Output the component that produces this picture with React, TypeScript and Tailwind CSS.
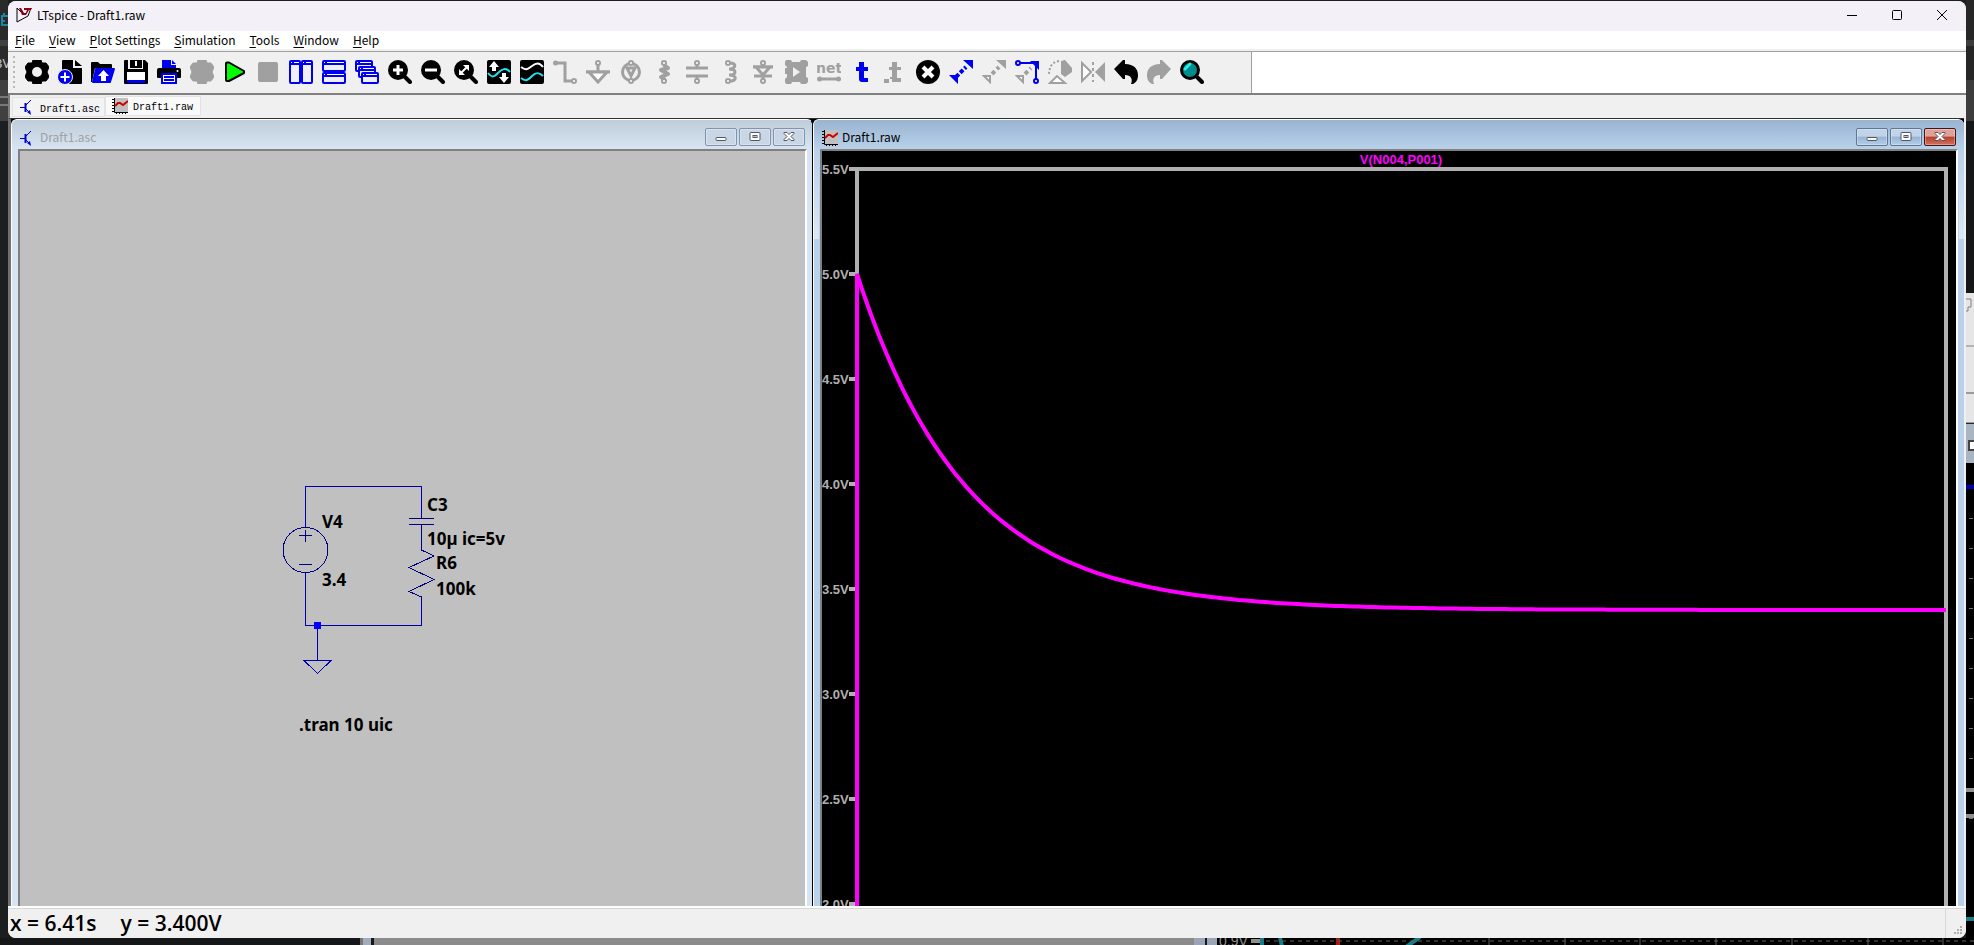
import React from 'react';

const GREY = '#a0a0a0';
const BLUE = '#0000f0';

interface ToolItem {
  label: string;
  icon: React.ReactNode;
}

const gearPath =
  'M8 0h8l1 3h4l3 4-2 5 2 5-3 4h-4l-1 3H8l-1-3H3l-3-4 2-5-2-5 3-4h4z';

const Lens = ({ children }: { children?: React.ReactNode }) => (
  <>
    <circle cx="10" cy="10" r="10" fill="#000" />
    <path d="M15 15l7 7" stroke="#000" strokeWidth="4" strokeLinecap="round" />
    {children}
  </>
);

const Pane = ({ x, y, w, h }: { x: number; y: number; w: number; h: number }) => (
  <>
    <rect x={x + 1} y={y + 1} width={w - 2} height={h - 2} rx="1" fill="#efeffa" stroke={BLUE} strokeWidth="2" />
    <path d={`M${x + 1} ${y + 3}h${w - 2}`} stroke={BLUE} strokeWidth="4" />
    <path d={`M${x + 2} ${y + 2.5}h1M${x + 5} ${y + 2.5}h${w - 7}`} stroke="#fff" />
  </>
);

const Pins = ({ x = 12 }: { x?: number }) => (
  <>
    <circle cx={x} cy="3" r="2" fill="#fff" stroke={GREY} strokeWidth="2" />
    <circle cx={x} cy="21" r="2" fill="#fff" stroke={GREY} strokeWidth="2" />
  </>
);

const tools: ToolItem[] = [
  {
    label: 'Settings',
    icon: (
      <>
        <path d={gearPath} fill="#000" stroke="#000" strokeLinejoin="round" />
        <circle cx="12" cy="12" r="5" fill="#f0f0f0" />
      </>
    ),
  },
  {
    label: 'New schematic',
    icon: (
      <>
        <path d="M4 1q0-1 1-1h10v8h9v15q0 1-1 1H5q-1 0-1-1z" fill="#000" />
        <path d="M17 0l7 6h-7z" fill="#000" />
        <circle cx="7" cy="17" r="7.5" fill={BLUE} stroke="#f0f0f0" />
        <path d="M7 12.500v9M2.500 17h9" stroke="#fff" strokeWidth="2" />
      </>
    ),
  },
  {
    label: 'Open',
    icon: (
      <>
        <path d="M0 3q0-1 1-1h6l2 2h11q1 0 1 1v3H4L1 22H0z" fill="#000" />
        <path d="M5 8h18q1 0 1 1l-4 13q0 1-1 1H2q-1 0-1-1L4 9q0-1 1-1z" fill={BLUE} />
        <path d="M12.500 10l5.500 6h-3v5h-5v-5H7z" fill="#fff" />
      </>
    ),
  },
  {
    label: 'Save',
    icon: (
      <>
        <path d="M1 0h3v9h15V0h2l3 3v20q0 1-1 1H1q-1 0-1-1V1q0-1 1-1z" fill="#000" />
        <path d="M6 0h12v8H6z" fill="#000" />
        <path d="M11 1h2v5h-2z" fill="#fff" />
        <path d="M3 12h18v8H3z" fill="#fff" />
        <path d="M3 20h18v3H3z" fill={BLUE} />
      </>
    ),
  },
  {
    label: 'Print',
    icon: (
      <>
        <path d="M5 0h9v5h5v3H5zM15 0l4 4h-4z" fill={BLUE} />
        <path d="M2 8h20q2 0 2 2v7q0 1-1 1H1q-1 0-1-1v-7q0-2 2-2z" fill="#000" />
        <circle cx="20.500" cy="11" r="1" fill="#fff" />
        <path d="M4 13h16v11H4z" fill="#f0f0f0" />
        <path d="M5 14h14v9H5z" fill="#fff" stroke={BLUE} strokeWidth="2" />
        <path d="M7 17h10M7 20h10" stroke={BLUE} strokeWidth="2" />
      </>
    ),
  },
  { label: 'Configure analysis', icon: <path d={gearPath} fill={GREY} stroke={GREY} strokeLinejoin="round" /> },
  {
    label: 'Run',
    icon: <path d="M3 3.500q0-1 1-1h2L21 11v2L6 21H4q-1 0-1-1z" fill="#00ff00" stroke="#000" strokeWidth="2" strokeLinejoin="round" />,
  },
  { label: 'Stop', icon: <rect x="2" y="2" width="20" height="20" rx="2" fill={GREY} /> },
  {
    label: 'Tile vertically',
    icon: (
      <>
        <Pane x={0} y={0} w={12} h={24} />
        <Pane x={12} y={0} w={12} h={24} />
      </>
    ),
  },
  {
    label: 'Tile horizontally',
    icon: (
      <>
        <Pane x={0} y={0} w={24} h={12} />
        <Pane x={0} y={12} w={24} h={12} />
      </>
    ),
  },
  {
    label: 'Cascade',
    icon: (
      <>
        <Pane x={0} y={0} w={18} h={12} />
        <Pane x={3} y={6} w={18} h={12} />
        <Pane x={6} y={12} w={18} h={12} />
      </>
    ),
  },
  { label: 'Zoom in', icon: <Lens><path d="M10 5v10M5 10h10" stroke="#fff" strokeWidth="3" /></Lens> },
  { label: 'Zoom out', icon: <Lens><path d="M4 10h12" stroke="#fff" strokeWidth="3" /></Lens> },
  {
    label: 'Zoom to fit',
    icon: (
      <Lens>
        <path d="M7 13l6-6" stroke="#fff" strokeWidth="2" />
        <path d="M9 5h6v6zM5 9v6h6z" fill="#fff" />
      </Lens>
    ),
  },
  {
    label: 'Autorange',
    icon: (
      <>
        <rect width="24" height="24" rx="2" fill="#000" />
        <path d="M1 13c4 5 6 4 10 0s8-6 12-1" stroke="#22e0ee" strokeWidth="2" fill="none" />
        <path d="M7 1l5 6H9v4H5V7H2zM17 23l-5-6h3v-4h4v4h3z" fill="#fff" />
      </>
    ),
  },
  {
    label: 'Plot traces',
    icon: (
      <>
        <rect width="24" height="24" rx="2" fill="#000" />
        <path d="M1 7c5 4 7 2 11-1s7-4 11 1" stroke="#fff" strokeWidth="2" fill="none" />
        <path d="M1 18c5 4 7 2 11-2s7-4 11 0" stroke="#22e0ee" strokeWidth="2" fill="none" />
      </>
    ),
  },
  {
    label: 'Wire',
    icon: (
      <>
        <path d="M2 3h10v18h7" stroke={GREY} strokeWidth="3" fill="none" />
        <circle cx="2.500" cy="3" r="2.500" fill={GREY} />
        <circle cx="21" cy="21" r="2" fill="#fff" stroke={GREY} strokeWidth="2" />
      </>
    ),
  },
  {
    label: 'Ground',
    icon: (
      <>
        <path d="M12 4v8M0 12h24" stroke={GREY} strokeWidth="3" />
        <path d="M3 12h18l-9 10z" fill="#fff" stroke={GREY} strokeWidth="3" />
        <circle cx="12" cy="3" r="2" fill="#fff" stroke={GREY} strokeWidth="2" />
      </>
    ),
  },
  {
    label: 'Voltage source',
    icon: (
      <>
        <circle cx="12" cy="12" r="8.500" fill="none" stroke={GREY} strokeWidth="3" />
        <path d="M8 8l4 8 4-8z" stroke={GREY} strokeWidth="3" fill="none" />
        <Pins />
      </>
    ),
  },
  {
    label: 'Resistor',
    icon: (
      <>
        <path d="M12 5l4 3-7 2 7 4-7 3 4 3" stroke={GREY} strokeWidth="4" strokeLinejoin="round" fill="none" />
        <Pins />
      </>
    ),
  },
  {
    label: 'Capacitor',
    icon: (
      <>
        <path d="M12 4v5M12 16v4M1 8h22M1 16h22" stroke={GREY} strokeWidth="3" />
        <Pins />
      </>
    ),
  },
  {
    label: 'Inductor',
    icon: (
      <>
        <path d="M10 3c10-1 8 6 1 6 8 0 8 6 0 6 9 0 8 7-1 6" stroke={GREY} strokeWidth="3" fill="none" />
        <Pins x={10} />
      </>
    ),
  },
  {
    label: 'Diode',
    icon: (
      <>
        <path d="M12 4v16M2 7h20M3 16h18" stroke={GREY} strokeWidth="3" />
        <path d="M5 7h14l-7 8z" fill="#f0f0f0" stroke={GREY} strokeWidth="3" />
        <Pins />
      </>
    ),
  },
  {
    label: 'Component',
    icon: (
      <>
        <path d="M2 0h5l1 2h8l1-2h5l2 2v4l-2 1v10l2 1v4l-2 2h-5l-1-2H8l-1 2H2l-1-2v-3l2-2v-3H1v-6h2V7L1 5V2z" fill={GREY} />
        <path d="M9 7v10l7-5z" fill="#f0f0f0" />
      </>
    ),
  },
  {
    label: 'Label net',
    icon: (
      <>
        <text x="-1" y="13" className="fill-[#a0a0a0] font-['DejaVu_Sans',sans-serif] text-[14px] font-bold">net</text>
        <path d="M3 19h18" stroke={GREY} strokeWidth="3" />
        <circle cx="2.500" cy="19" r="2.500" fill={GREY} />
        <circle cx="21.500" cy="19" r="2.500" fill={GREY} />
      </>
    ),
  },
  { label: 'Text', icon: <path d="M9 2h5v5h4v4h-4v7h4v4h-6q-3 0-3-3v-8H6V7h3z" fill={BLUE} /> },
  {
    label: 'SPICE directive',
    icon: (
      <>
        <path d="M9 2h5v5h4v3h-4v8h4v4H9v-3H7v-2h2v-7H6V7h3z" fill={GREY} />
        <path d="M1 19h5v4H1z" fill={GREY} />
      </>
    ),
  },
  {
    label: 'Delete',
    icon: (
      <>
        <circle cx="12" cy="12" r="12" fill="#000" />
        <path d="M7 7l10 10M17 7L7 17" stroke="#fff" strokeWidth="4" />
      </>
    ),
  },
  {
    label: 'Duplicate',
    icon: (
      <>
        <path d="M14 0h10v9zM0 15h9v9z" fill={BLUE} />
        <path d="M7 17l10-10" stroke={BLUE} strokeWidth="4" strokeDasharray="4 2" />
      </>
    ),
  },
  {
    label: 'Move',
    icon: (
      <>
        <path d="M14 0h10v9z" fill={GREY} />
        <path d="M2 16h6v6z" fill="#fff" stroke={GREY} strokeWidth="2" />
        <path d="M10 14l7-7" stroke={GREY} strokeWidth="4" strokeDasharray="4 3" />
      </>
    ),
  },
  {
    label: 'Drag',
    icon: (
      <>
        <path d="M2 16h6v6z" fill="#fff" stroke={GREY} strokeWidth="2" />
        <path d="M10 14l6-6" stroke={GREY} strokeWidth="4" strokeDasharray="4 3" />
        <path d="M5 3h16v16" stroke={BLUE} strokeWidth="2" fill="none" />
        <path d="M15 1h9v9z" fill={BLUE} />
        <circle cx="3" cy="3" r="2" fill="#fff" stroke={BLUE} strokeWidth="2" />
        <circle cx="21" cy="21" r="2" fill="#fff" stroke={BLUE} strokeWidth="2" />
      </>
    ),
  },
  {
    label: 'Rotate',
    icon: (
      <>
        <path d="M13 1l4-1 7 8v4l-7 5-4-3z" fill={GREY} />
        <path d="M11 1C4 2 1 7 1 15" stroke={GREY} strokeWidth="2" strokeDasharray="2 2" fill="none" />
        <path d="M2 23l7-7 8 7z" fill="#fff" stroke={GREY} strokeWidth="2" />
      </>
    ),
  },
  {
    label: 'Mirror',
    icon: (
      <>
        <path d="M1 3v18l9-9z" fill="#fff" stroke={GREY} strokeWidth="2" />
        <path d="M24 2v20L14 12z" fill={GREY} />
        <path d="M12 2v20" stroke={GREY} strokeWidth="2" strokeDasharray="3 3" />
      </>
    ),
  },
  { label: 'Undo', icon: <path d="M0 9l9-9h2v4c9 0 13 5 13 11 0 4-1 7-5 9h-2c2-5 0-9-6-9v4H9z" fill="#000" /> },
  { label: 'Redo', icon: <path d="M24 9l-9-9h-2v4C4 4 0 9 0 15c0 4 1 7 5 9h2c-2-5 0-9 6-9v4h2z" fill={GREY} /> },
  {
    label: 'Search',
    icon: (
      <>
        <path d="M16 16l6 6" stroke="#000" strokeWidth="4" strokeLinecap="round" />
        <circle cx="10" cy="10" r="8.500" fill="#008b8b" stroke="#000" strokeWidth="3" />
        <path d="M5 9l5-5" stroke="#22f0f0" strokeWidth="3" strokeLinecap="round" />
      </>
    ),
  },
];

const menus = ['File', 'View', 'Plot Settings', 'Simulation', 'Tools', 'Window', 'Help'];

const SchematicIcon = () => (
  <svg width="16" height="16" viewBox="0 0 16 16" fill="none" stroke="#0000d0" aria-hidden="true">
    <path d="M0 8.500h5" />
    <path d="M5.500 4v9" strokeWidth="2" />
    <path d="M6 6l5-5M6 10l3 3" />
    <path d="M7 13l4 3-1-5z" fill="#0000d0" stroke="none" />
  </svg>
);

const PlotIcon = () => (
  <svg width="16" height="16" viewBox="0 0 16 16" fill="none" aria-hidden="true">
    <path d="M2 0h14v14H2z" fill="#c0c0c0" />
    <path d="M2.500 0v14.500H16" stroke="#000" />
    <path d="M0 1.500h2M0 4.500h2M0 7.500h2M0 10.500h2M0 13.500h2M4.500 14v2M7.500 14v2M10.500 14v2M13.500 14v2" stroke="#000" />
    <path d="M3 8l3-3h2l3 2 5-4" stroke="#d00000" strokeWidth="2" />
  </svg>
);

const TitleBar = () => (
  <header className="flex h-[30px] items-center bg-[#f3f0f8] pr-0.5 pb-0.5">
    <svg className="ml-2 shrink-0" width="16" height="16" viewBox="0 0 16 16" aria-hidden="true">
      <path d="M1 1v14l11-6 3-8" fill="none" stroke="#000" />
      <path d="M1 1l5 5" stroke="#000" />
      <path d="M3 1h2l3 5h2l-1 2H6zM8 1h8l-1 2h-2l-3 5H9l2-5H8z" fill="#8b0010" />
    </svg>
    <h1 className="ml-[5px] grow font-['Noto_Sans_CJK_SC',sans-serif] text-[12px] leading-4 text-black">
      LTspice - Draft1.raw
    </h1>
    <button aria-label="Minimize" className="flex h-full w-[45px] items-center justify-center">
      <svg width="10" height="10"><path d="M0 5.500h10" stroke="#000" /></svg>
    </button>
    <button aria-label="Maximize" className="flex h-full w-[45px] items-center justify-center">
      <svg width="10" height="10"><rect x=".5" y=".5" width="9" height="9" rx="1" fill="none" stroke="#000" /></svg>
    </button>
    <button aria-label="Close" className="flex h-full w-[45px] items-center justify-center">
      <svg width="10" height="10"><path d="M0 0l10 10M10 0L0 10" stroke="#000" /></svg>
    </button>
  </header>
);

const MenuBar = () => (
  <nav className="flex h-5 gap-3.5 border-b-2 border-[#f0f0f0] bg-white pl-[7px] font-['Noto_Sans_CJK_SC',sans-serif] text-[12px] leading-[18px] text-black">
    {menus.map((name) => (
      <button key={name} className="whitespace-nowrap">
        <span className="underline underline-offset-2">{name[0]}</span>
        {name.slice(1)}
      </button>
    ))}
  </nav>
);

const Toolbar = () => (
  <div className="flex h-[44px] border-t border-b-2 border-t-[#a0a0a0] border-b-[#808080] bg-white">
    <div role="toolbar" className="flex items-center gap-[9px] border-r border-[#a0a0a0] bg-[#f0f0f0] pr-[47px] pl-[5px]">
      <div className="mr-px h-8 w-0.5 shrink-0 bg-[repeating-linear-gradient(#b8b8b8_0_2px,transparent_2px_5px)]"></div>
      {tools.map((tool) => (
        <button key={tool.label} aria-label={tool.label} className="h-6 w-6 shrink-0">
          <svg width="24" height="24" viewBox="0 0 24 24" fill="none">{tool.icon}</svg>
        </button>
      ))}
    </div>
  </div>
);

const DocumentTabs = () => (
  <div role="tablist" className="flex h-[23px] items-start border-l-2 border-[#808080] bg-[#f0f0f0] pl-0.5 font-['Liberation_Mono',monospace] text-[10px] text-black">
    <button role="tab" aria-selected="false" className="mt-0.5 flex h-5 items-center border border-[#e3e3e3] bg-[#f3f3f3] pt-px pr-1 pl-[7px]">
      <SchematicIcon />
      <span className="ml-1 pt-1">Draft1.asc</span>
    </button>
    <button role="tab" aria-selected="true" className="mt-px flex h-5 items-center border border-[#e3e3e3] bg-[#f9f9f9] pr-[7px] pl-1.5">
      <PlotIcon />
      <span className="ml-[5px] pt-1">Draft1.raw</span>
    </button>
  </div>
);

const CaptionButton = ({ kind, active }: { kind: 'Minimize' | 'Restore' | 'Close'; active: boolean }) => {
  let tone = 'border-[#8194ae] bg-[#c9d6e6]';
  if (active) {
    tone =
      kind === 'Close'
        ? 'border-[#43141a] bg-[linear-gradient(#e0a197_0_45%,#b8402b_50%,#d3705c)]'
        : 'border-[#5f7695] bg-[linear-gradient(#c0d3e8_0_45%,#98b4d3_50%,#b4cde8)]';
  }
  return (
    <button aria-label={kind} className={`flex h-[18px] w-8 items-center justify-center rounded-xs border inset-ring inset-ring-white/30 ${tone}`}>
      <svg width="12" height="10" viewBox="0 0 12 10" fill="#fff" stroke="#535666">
        {kind === 'Minimize' && <rect x="1" y="5.500" width="10" height="3" rx="1" />}
        {kind === 'Restore' && (
          <>
            <rect x="1" y=".5" width="10" height="8" rx="1" />
            <rect x="4" y="3.500" width="4" height="2" fill="#b4c4d8" />
          </>
        )}
        {kind === 'Close' && <path d="M1 .5h3l2 2 2-2h3v1L8 4.500l3 3v1H8l-2-2-2 2H1v-1l3-3-3-3z" />}
      </svg>
    </button>
  );
};

interface ChildWindowProps {
  title: string;
  active: boolean;
  icon: React.ReactNode;
  children: React.ReactNode;
}

const ChildWindow = ({ title, active, icon, children }: ChildWindowProps) => (
  <section
    className={`flex min-w-0 flex-col overflow-hidden rounded-t-md border-t border-l border-white ${
      active ? 'bg-[#b9d1ea]' : 'border-r border-r-black bg-[#d7e4f2]'
    }`}
  >
    <div
      className={`flex h-[29px] shrink-0 items-end gap-0.5 pb-[3px] pl-2 ${
        active ? 'bg-linear-to-b from-[#99b4d1] to-[#b9d1ea] pr-2' : 'bg-linear-to-b from-[#bfcddb] to-[#d7e4f2] pr-[7px]'
      }`}
    >
      {icon}
      <h2
        className={`ml-0.5 grow font-['Noto_Sans_CJK_SC',sans-serif] text-[12px] leading-[18px] ${
          active ? 'text-black' : 'text-[#a0a0a0]'
        }`}
      >
        {title}
      </h2>
      <CaptionButton kind="Minimize" active={active} />
      <CaptionButton kind="Restore" active={active} />
      <CaptionButton kind="Close" active={active} />
    </div>
    <div className="flex min-h-0 grow">
      <div className="w-1.5 shrink-0">
        {active && <div className="h-[90px] w-[5px] bg-linear-to-b from-[#b9d1ea] to-[#dbe8f6]"></div>}
      </div>
      <div className="min-w-0 grow overflow-hidden border-t-2 border-r-2 border-l-2 border-t-[#808080] border-r-white border-l-[#808080]">
        {children}
      </div>
      <div className={active ? 'w-1.5 shrink-0' : 'w-[5px] shrink-0'}>
        {active && <div className="ml-px h-[90px] bg-linear-to-b from-[#b9d1ea] to-[#dbe8f6]"></div>}
      </div>
    </div>
  </section>
);

const Schematic = () => (
  <svg className="block h-full w-full bg-[#c0c0c0]" fill="none">
    <g transform="translate(285 335)" stroke="#0000b0" shapeRendering="crispEdges">
      <path d="M.5 41V.5h116V33M.5 87v52.500h116V110M12.500 139v36" />
      <path d="M-1 174.500h27l-13.500 13z" />
      <g stroke="#000080">
        <circle cx=".5" cy="64" r="22.500" />
        <path d="M-6 49.500H7M.5 44v12M-6 78.500H7" />
        <path d="M104 32.500h25M104 38.500h25M116.500 39v25l12.500 6-25 11.500 25 12-25 12 12.500 5.500v3" />
      </g>
      <rect x="9" y="136" width="7" height="7" fill="#0000ff" stroke="none" />
    </g>
    <g className="fill-black font-['Noto_Sans',sans-serif] text-[17px] font-bold">
      <text x="302" y="377">V4</text>
      <text x="302" y="435">3.4</text>
      <text x="407" y="360">C3</text>
      <text x="407" y="394">10µ ic=5v</text>
      <text x="416" y="418">R6</text>
      <text x="416" y="444">100k</text>
      <text x="279" y="580">.tran 10 uic</text>
    </g>
  </svg>
);

// 3.4 V supply, capacitor precharged to 5 V, RC = 1 s
const PX_PER_VOLT = 210;
const PX_PER_SECOND = 108.9;
const voltY = (v: number) => 18 + (5.5 - v) * PX_PER_VOLT;
const curve = Array.from({ length: 201 }, (_, i) => {
  const t = i / 20;
  return `${(35 + t * PX_PER_SECOND).toFixed(1)},${voltY(3.4 + 1.6 * Math.exp(-t)).toFixed(1)}`;
}).join(' ');
const ticks = [5.5, 5, 4.5, 4, 3.5, 3, 2.5, 2];

const Waveform = () => (
  <div className="h-full bg-black">
    <svg className="block h-auto w-full" viewBox="0 0 1134 756" fill="none">
      <path d="M35 756V18h1089v738" stroke="#b0b0b0" strokeWidth="4" />
      <g className="fill-[#b0b0b0] font-['Liberation_Sans',Arial,sans-serif] text-[13px] font-bold">
        {ticks.map((v) => (
          <React.Fragment key={v}>
            <path d={`M27 ${voltY(v)}h8`} stroke="#b0b0b0" strokeWidth="4" />
            <text x="0" y={voltY(v) + 5}>{v.toFixed(1)}V</text>
          </React.Fragment>
        ))}
      </g>
      <text x="579" y="13" textAnchor="middle" className="fill-[#ff00ff] font-['Liberation_Sans',Arial,sans-serif] text-[13px] font-bold">
        V(N004,P001)
      </text>
      <polyline points={`35,756 ${curve}`} stroke="#ff00ff" strokeWidth="4" />
    </svg>
  </div>
);

const StatusBar = () => (
  <footer className="flex h-8 shrink-0 border-t-2 border-white bg-[#f0f0f0]">
    <div className="flex grow items-start gap-6 border-t border-r border-[#d7d7d7] pt-0.5 pl-0.5 font-['Open_Sans',sans-serif] text-[21px] leading-6 font-semibold text-black">
      <span>x = 6.41s</span>
      <span>y = 3.400V</span>
    </div>
    <div className="flex w-5 items-end justify-end border-t border-[#d7d7d7] p-1">
      <svg width="8" height="8" fill="#b0b0b0">
        <path d="M6 0h2v2H6zM3 3h2v2H3zM6 3h2v2H6zM0 6h2v2H0zM3 6h2v2H3zM6 6h2v2H6z" />
      </svg>
    </div>
  </footer>
);

const LeftEdge = () => (
  <svg className="block h-full w-full bg-[#1c1f20]" aria-hidden="true">
    <path d="M0 0h8v121H0z" fill="#2a2a2a" />
    <path d="M0 40h8v6H0zM0 80h8v41H0z" fill="#404040" />
    <path d="M0 97h8M0 105h8" stroke="#b0b0b0" />
    <path d="M8 16H2v9h6M4 13v3M4 20v2" stroke="#1787a5" strokeWidth="2" fill="none" />
    <text x="-5" y="68" className="fill-[#c8c8c8] font-['Noto_Sans',sans-serif] text-[13px]">3V</text>
  </svg>
);

const RightEdge = () => (
  <svg className="block h-full w-full bg-black" fill="none" aria-hidden="true">
    <path d="M0 0h8v293H0z" fill="#141617" />
    <path d="M0 0h8v80H0z" fill="#262626" />
    <path d="M0 40h8v6H0zM0 80h8v41H0z" fill="#3c3c3c" />
    <path d="M0 293h8v130H0z" fill="#e6e6e6" />
    <path d="M0 346h8" stroke="#808080" />
    <path d="M0 393h8M0 423h8" stroke="#505050" />
    <path d="M0 299h5v8H2v4H0" stroke="#808080" />
    <path d="M0 424h8v39H0z" fill="#a9b5c3" />
    <path d="M8 441H3v9h5" fill="#fff" stroke="#444" strokeWidth="2" />
    <path d="M0 487h8" stroke="#0000b0" strokeWidth="4" />
    <path d="M5 518v310" stroke="#707070" strokeWidth="4" strokeDasharray="1 29" />
    <path d="M0 790h8M0 816h8" stroke="#909090" strokeWidth="4" />
    <path d="M0 919h8" stroke="#167c85" strokeWidth="4" />
  </svg>
);

const BottomEdge = () => (
  <svg className="block h-full w-full bg-[#151718]" fill="none" aria-hidden="true">
    <path d="M360 0h3v8h-3z" fill="#777" />
    <path d="M363 0h8v8h-8z" fill="#a2adbb" />
    <path d="M374 0h820v8H374z" fill="#8a8b8a" />
    <path d="M1194 0h11v8h-11zM1207 0h10v8h-10z" fill="#9aa6b5" />
    <path d="M1217 0h757v8h-757z" fill="#000" />
    <text x="1219" y="8" className="fill-[#909090] font-['Liberation_Sans',Arial,sans-serif] text-[14px]">0.9V</text>
    <path d="M1251 3h9" stroke="#909090" strokeWidth="4" />
    <path d="M1262 0v8M1280 0l2 8M1420-1l-14 10" stroke="#167c85" strokeWidth="4" />
    <path d="M1338 0v8" stroke="#a81c10" strokeWidth="4" />
    <path d="M1266 3h708" stroke="#606060" strokeDasharray="4 4" />
    <path d="M1489 0v8M1565 0v8M1640 0v8M1716 0v8M1792 0v8M1868 0v8M1943 0v8" stroke="#606060" />
  </svg>
);

const App = () => {
  return (
    <div className="grid h-screen grid-cols-[8px_minmax(0,1fr)_8px] grid-rows-[minmax(0,1fr)_7px] overflow-hidden bg-[#1c1f20]">
      <LeftEdge />
      <main className="mt-px flex min-h-0 flex-col overflow-hidden rounded-lg bg-[#f0f0f0]">
        <TitleBar />
        <MenuBar />
        <Toolbar />
        <DocumentTabs />
        <div className="mr-0.5 grid min-h-0 grow grid-cols-[802fr_1151fr] border-t border-l-3 border-t-[#303030] border-l-[#707070] bg-black">
          <ChildWindow title="Draft1.asc" active={false} icon={<SchematicIcon />}>
            <Schematic />
          </ChildWindow>
          <ChildWindow title="Draft1.raw" active icon={<PlotIcon />}>
            <Waveform />
          </ChildWindow>
        </div>
        <StatusBar />
      </main>
      <RightEdge />
      <div className="col-span-3">
        <BottomEdge />
      </div>
    </div>
  );
};

export default App;
